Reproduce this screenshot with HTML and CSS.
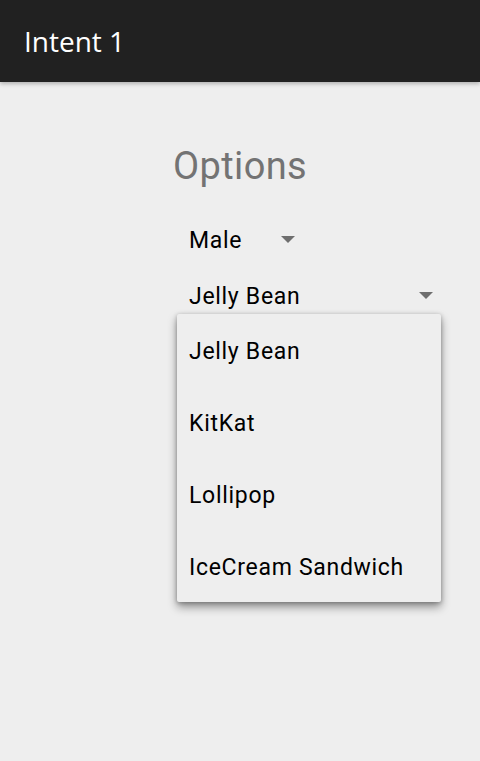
FILE: index.html
```html
<!DOCTYPE html>
<html>
<head>
<meta charset="utf-8">
<link rel="stylesheet" href="styles.css">
</head>
<body>
<header class="appbar"><span class="appbar-title">Intent 1</span></header>
<main class="content">
  <h1 class="options-title">Options</h1>
  <div class="spinners">
    <div class="spinner spinner-short">
      <span class="spinner-text">Male</span>
      <span class="arrow"></span>
    </div>
    <div class="spinner spinner-wide">
      <span class="spinner-text">Jelly Bean</span>
      <span class="arrow"></span>
      <ul class="popup">
        <li class="popup-item">Jelly Bean</li>
        <li class="popup-item">KitKat</li>
        <li class="popup-item">Lollipop</li>
        <li class="popup-item">IceCream Sandwich</li>
      </ul>
    </div>
  </div>
</main>
</body>
</html>
```
FILE: styles.css
```css
html, body {
  margin: 0;
  padding: 0;
  background: #eeeeee;
  height: 100%;
}
body {
  font-family: Roboto, "Noto Sans", sans-serif;
}
.appbar {
  height: 82px;
  background: #212121;
  display: flex;
  align-items: center;
  padding-left: 24px;
  box-shadow: 0 2px 4px rgba(0,0,0,0.25);
  position: relative;
  z-index: 2;
}
.appbar-title {
  color: #ffffff;
  font-family: "Open Sans", "Noto Sans", sans-serif;
  font-size: 28px;
  line-height: 1;
  margin-top: -1px;
}
.content {
  display: flex;
  flex-direction: column;
}
.options-title {
  margin: 0;
  margin-top: 60px;
  text-align: center;
  font-weight: 400;
  font-size: 38px;
  letter-spacing: 0.4px;
  line-height: 48px;
  color: #737373;
}
.spinners {
  display: flex;
  flex-direction: column;
  margin-left: 177px;
  margin-top: 22px;
}
.spinner {
  position: relative;
  height: 56px;
  display: flex;
  align-items: center;
  padding-left: 12px;
  box-sizing: border-box;
}
.spinner-short { width: 126px; }
.spinner-wide { width: 264px; }
.spinner-text {
  font-size: 23px;
  letter-spacing: 0.7px;
  color: #000000;
  flex: 1;
  padding-top: 1px;
}
.arrow {
  width: 0;
  height: 0;
  border-left: 7px solid transparent;
  border-right: 7px solid transparent;
  border-top: 7px solid #6e6e6e;
  margin-right: 8px;
  margin-top: -2px;
}
.popup {
  position: absolute;
  left: 0;
  top: 46px;
  width: 264px;
  margin: 0;
  padding: 0;
  list-style: none;
  background: #eeeeee;
  border-radius: 2px;
  box-shadow: 0 5px 10px rgba(0,0,0,0.4), 0 1px 4px rgba(0,0,0,0.25);
  z-index: 3;
}
.popup-item {
  height: 72px;
  display: flex;
  align-items: center;
  padding-left: 12px;
  padding-top: 2px;
  box-sizing: border-box;
  font-size: 23px;
  letter-spacing: 0.7px;
  color: #000000;
}
```
